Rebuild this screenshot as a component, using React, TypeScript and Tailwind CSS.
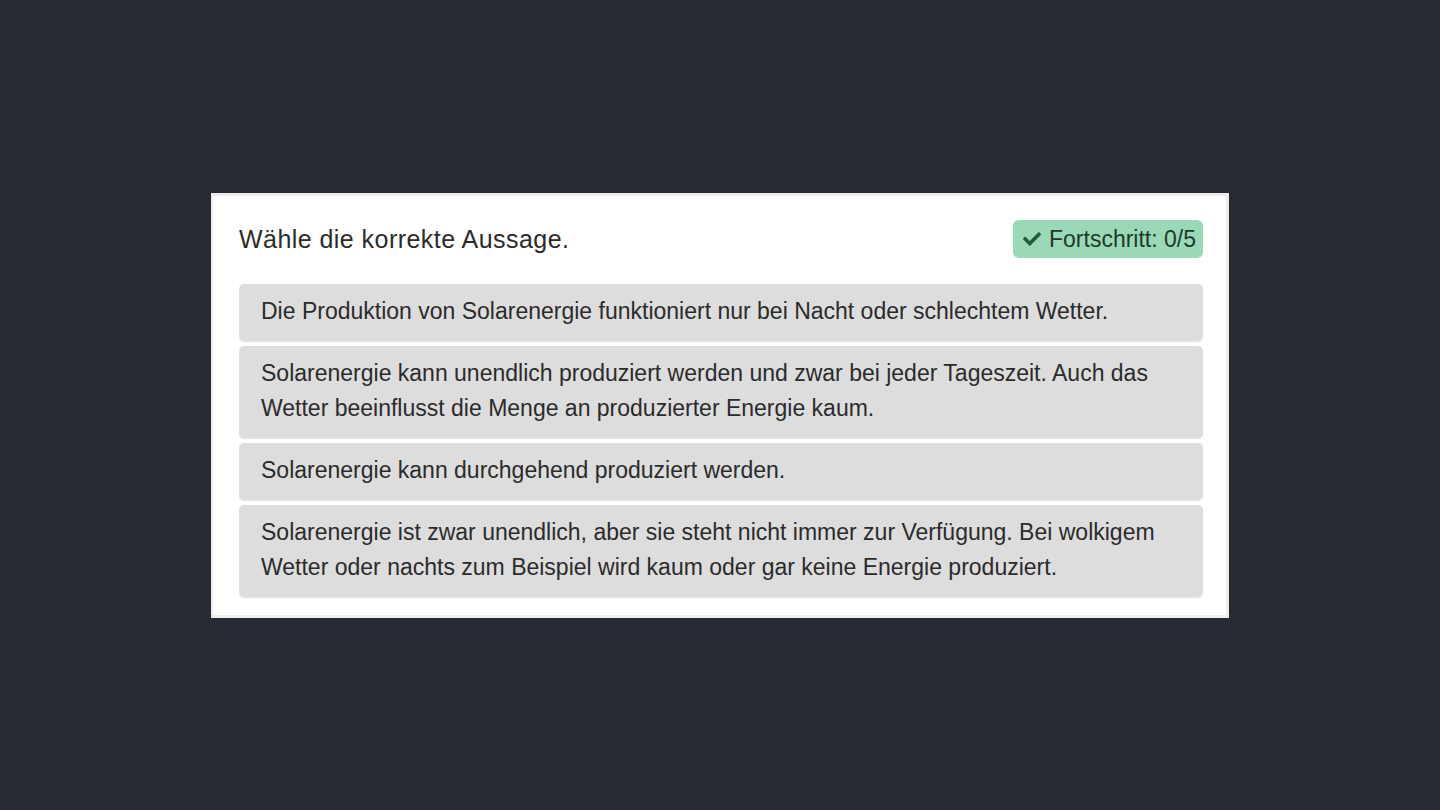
import { FaCheck } from "react-icons/fa";

const options = [
  "Die Produktion von Solarenergie funktioniert nur bei Nacht oder schlechtem Wetter.",
  "Solarenergie kann unendlich produziert werden und zwar bei jeder Tageszeit. Auch das Wetter beeinflusst die Menge an produzierter Energie kaum.",
  "Solarenergie kann durchgehend produziert werden.",
  "Solarenergie ist zwar unendlich, aber sie steht nicht immer zur Verfügung. Bei wolkigem Wetter oder nachts zum Beispiel wird kaum oder gar keine Energie produziert.",
];

export default function App() {
  return (
    <div
      className="flex h-[810px] w-full items-start justify-center bg-[#272a33] pt-[193px]"
      style={{ fontFamily: '"Liberation Sans", Arial, sans-serif' }}
    >
      <div className="w-[1018px] border-[3px] border-l-[2px] border-[#eeeeee] bg-white pt-[24px] pr-[23px] pb-[19px] pl-[26px]">
        {/* Kopfzeile mit Frage und Fortschritt */}
        <div className="mb-[26px] flex h-[38px] items-center justify-between">
          <h2 className="text-[25px] leading-[38px] tracking-[0.45px] text-[#2b2b2b]">Wähle die korrekte Aussage.</h2>
          <span className="flex h-[38px] items-center gap-[8px] rounded-[6px] bg-[#9ad8b8] pr-[7px] pl-[10px] text-[23px] text-[#1e3a2a]">
            <FaCheck className="h-[18px] w-[18px] text-[#245c3b]" />
            Fortschritt: 0/5
          </span>
        </div>

        <div className="flex flex-col gap-[6px]">
          {options.map((text) => (
            <button
              key={text}
              className="rounded-[5px] bg-[#dddddd] pt-[10px] pr-[22px] pb-[11px] pl-[22px] text-left text-[23px] leading-[35px] text-[#2b2b2b] shadow-[0_2px_1px_rgba(0,0,0,0.12)]"
            >
              {text}
            </button>
          ))}
        </div>
      </div>
    </div>
  );
}
